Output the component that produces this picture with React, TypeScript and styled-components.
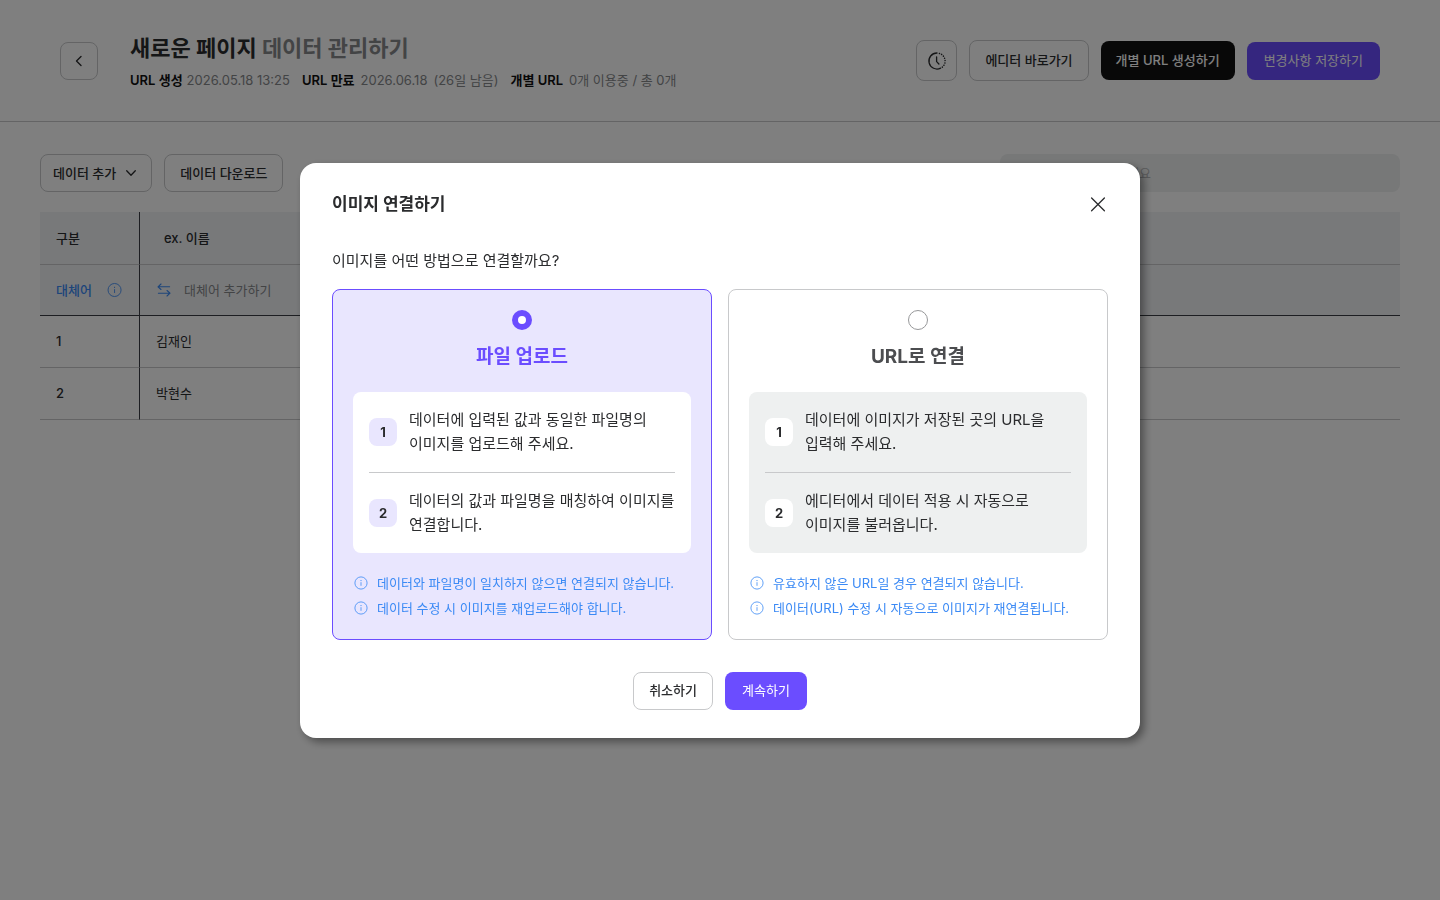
import React, { useState } from "react";
import styled, { createGlobalStyle, css } from "styled-components";

const color = {
  text: "#2b2c2e",
  strong: "#111111",
  sub: "#86888b",
  line: "#c8c9cb",
  purple: "#6b4dff",
  lilac: "#e9e6fe",
  blue: "#3b8af5",
  mist: "#eef0f0",
  head: "#f0f2f5",
  white: "#ffffff",
};

const GlobalStyle = createGlobalStyle`
  *, *::before, *::after { box-sizing: border-box; }
  body {
    margin: 0;
    background: ${color.white};
    color: ${color.text};
    font-family: Inter, "Noto Sans CJK KR", sans-serif;
    font-size: 13px;
    line-height: 21px;
    word-break: keep-all;
  }
  button, input { font: inherit; color: inherit; }
  button { cursor: pointer; }
  h1, h2, h3, p, ol, ul, dl, dd { margin: 0; padding: 0; }
  ol, ul { list-style: none; }
`;

const Page = styled.div`
  min-height: 100vh;
`;

const PageHeader = styled.header`
  display: flex;
  align-items: center;
  height: 122px;
  padding: 0 60px;
  border-bottom: 1px solid ${color.line};
`;

type Variant = "outline" | "black" | "purple";

const variants = {
  outline: css`
    padding: 0 15px;
    border: 1px solid ${color.line};
    background: ${color.white};
  `,
  black: css`
    padding: 0 15px;
    border: 0;
    background: ${color.strong};
    color: ${color.white};
  `,
  purple: css`
    padding: 0 17px;
    border: 0;
    background: ${color.purple};
    color: ${color.white};
    font-weight: 400;
  `,
};

const Button = styled.button<{ $variant?: Variant; $height?: number }>`
  display: inline-flex;
  align-items: center;
  justify-content: center;
  gap: 8px;
  height: ${({ $height = 38 }) => $height}px;
  border-radius: 8px;
  font-weight: 500;
  white-space: nowrap;
  ${({ $variant = "outline" }) => variants[$variant]}
`;

const IconButton = styled(Button)`
  width: ${({ $height = 38 }) => $height}px;
  padding: 0;
`;

const DropButton = styled(Button)`
  padding: 0 13px 0 12px;
`;

const Heading = styled.div`
  flex: 1;
  margin-left: 32px;
`;

const PageTitle = styled.h1`
  font-size: 22px;
  line-height: 36px;
  font-weight: 700;
  color: ${color.text};

  span {
    color: ${color.sub};
  }
`;

const MetaList = styled.dl`
  display: flex;
  gap: 12px;
  margin-top: 4px;
`;

const MetaItem = styled.div<{ $gap?: number }>`
  display: flex;
  gap: ${({ $gap = 6 }) => $gap}px;
  white-space: nowrap;

  dt {
    font-weight: 600;
    color: ${color.strong};
  }
  dd {
    color: ${color.sub};
  }
`;

const Actions = styled.div`
  display: flex;
  align-items: center;
  gap: 12px;
`;

const Content = styled.main`
  padding: 32px 40px;
`;

const Toolbar = styled.div`
  display: flex;
  gap: 12px;
  margin-bottom: 20px;
`;

const Search = styled.input`
  width: 400px;
  height: 38px;
  margin-left: auto;
  padding: 0 24px;
  border: 0;
  border-radius: 8px;
  background: ${color.mist};

  &::placeholder {
    color: #b4b6b8;
    opacity: 1;
  }
`;

const Table = styled.table`
  width: 100%;
  border-collapse: separate;
  border-spacing: 0;
  table-layout: fixed;
`;

const Row = styled.tr<{ $height?: number; $shaded?: boolean; $dark?: boolean }>`
  height: ${({ $height = 52 }) => $height}px;
  background: ${({ $shaded }) => ($shaded ? color.head : color.white)};

  > * {
    padding: 0 16px;
    border-bottom: 1px solid ${({ $dark }) => ($dark ? "#3a3d44" : color.line)};
    text-align: left;
    font-weight: 400;
  }
  > :first-child {
    width: 100px;
    border-right: 1px solid #3a3d44;
    font-weight: 500;
  }
`;

const ColumnName = styled.th`
  && {
    padding-left: 24px;
    font-weight: 500;
  }
`;

const AliasLabel = styled.div`
  display: flex;
  align-items: center;
  gap: 14px;
  color: ${color.blue};
`;

const AliasButton = styled.button`
  display: flex;
  align-items: center;
  gap: 12px;
  padding: 0;
  border: 0;
  background: none;
  color: ${color.sub};

  svg {
    color: ${color.blue};
  }
`;

const Overlay = styled.div`
  position: fixed;
  inset: 0;
  display: flex;
  align-items: center;
  justify-content: center;
  background: rgba(0, 0, 0, 0.5);
`;

const Modal = styled.section`
  width: 840px;
  max-width: 100%;
  padding: 28px 32px;
  border-radius: 16px;
  background: ${color.white};
  box-shadow: 4px 4px 8px rgba(0, 0, 0, 0.4);
`;

const ModalHeader = styled.header`
  display: flex;
  align-items: center;
  justify-content: space-between;
  margin-bottom: 32px;
`;

const ModalTitle = styled.h2`
  font-size: 17px;
  line-height: 26px;
  font-weight: 700;
`;

const CloseButton = styled.button`
  display: flex;
  padding: 0;
  border: 0;
  background: none;
`;

const Question = styled.p`
  margin-bottom: 16px;
  font-size: 15px;
  line-height: 24px;
`;

const Options = styled.div`
  display: grid;
  grid-template-columns: 1fr 1fr;
  gap: 16px;
`;

const OptionCard = styled.label<{ $selected: boolean }>`
  display: flex;
  flex-direction: column;
  align-items: center;
  padding: 20px;
  border: 1px solid ${({ $selected }) => ($selected ? color.purple : color.line)};
  border-radius: 8px;
  background: ${({ $selected }) => ($selected ? color.lilac : color.white)};
  cursor: pointer;
`;

const Radio = styled.input`
  appearance: none;
  width: 20px;
  height: 20px;
  margin: 0;
  border: 1px solid #97989a;
  border-radius: 50%;
  background: ${color.white};

  &:checked {
    border: 6px solid ${color.purple};
  }
`;

const OptionTitle = styled.h3<{ $selected: boolean }>`
  margin: 12px 0 20px;
  font-size: 19px;
  line-height: 30px;
  font-weight: 700;
  color: ${({ $selected }) => ($selected ? color.purple : "#4c4d50")};
`;

const Steps = styled.ol<{ $selected: boolean }>`
  width: 100%;
  padding: 0 16px;
  border-radius: 8px;
  background: ${({ $selected }) => ($selected ? color.white : color.mist)};
`;

const Step = styled.li`
  display: flex;
  align-items: center;
  gap: 12px;
  padding: 16px 0;
  font-size: 15px;
  line-height: 24px;

  & + & {
    border-top: 1px solid ${color.line};
  }
`;

const StepNumber = styled.span<{ $selected: boolean }>`
  flex: none;
  width: 28px;
  height: 28px;
  border-radius: 8px;
  background: ${({ $selected }) => ($selected ? color.lilac : color.white)};
  font-size: 13px;
  line-height: 28px;
  font-weight: 700;
  text-align: center;
`;

const Notes = styled.ul`
  display: grid;
  gap: 4px;
  width: 100%;
  margin-top: 20px;
`;

const Note = styled.li`
  display: flex;
  align-items: center;
  gap: 8px;
  color: ${color.blue};
  white-space: nowrap;
`;

const ModalFooter = styled.footer`
  display: flex;
  justify-content: center;
  gap: 12px;
  margin-top: 32px;
`;

const InfoIcon = ({ size = 16 }: { size?: number }) => (
  <svg width={size} height={size} viewBox="0 0 16 16" fill="none" stroke="currentColor" aria-hidden="true">
    <circle cx="8" cy="8" r="6.1" strokeWidth="0.8" />
    <path d="M8 7.2v3.6" strokeWidth="0.8" />
    <path d="M8 5v1.1" strokeWidth="0.9" />
  </svg>
);

const BackIcon = () => (
  <svg width="16" height="16" viewBox="0 0 16 16" fill="none" stroke="currentColor" strokeWidth="1.4" strokeLinecap="round" strokeLinejoin="round" aria-hidden="true">
    <path d="M10 3.5 5.5 8l4.5 4.5" />
  </svg>
);

const DownIcon = () => (
  <svg width="14" height="14" viewBox="0 0 14 14" fill="none" stroke="currentColor" strokeWidth="1.3" strokeLinecap="round" strokeLinejoin="round" aria-hidden="true">
    <path d="M2.7 4.8 7 9.2l4.3-4.4" />
  </svg>
);

const HistoryIcon = () => (
  <svg width="20" height="20" viewBox="0 0 20 20" fill="none" stroke="currentColor" strokeWidth="1.3" strokeLinecap="round" aria-hidden="true">
    <path d="M10 2a8 8 0 1 0 3.6 15.1" />
    <path d="M12.4 2.4a8 8 0 0 1 2.6 14" strokeDasharray="0.1 2.3" strokeWidth="1.5" />
    <path d="M9.6 6v4.6l2.3 2.4" />
  </svg>
);

const SwapIcon = () => (
  <svg width="16" height="16" viewBox="0 0 16 16" fill="none" stroke="currentColor" strokeWidth="1.1" strokeLinecap="round" strokeLinejoin="round" aria-hidden="true">
    <path d="M5 2 2 4.8l3 2.7M2 4.8h11.6" />
    <path d="m11 8.5 3 2.7-3 2.8M14 11.2H2.4" />
  </svg>
);

const CloseIcon = () => (
  <svg width="20" height="20" viewBox="0 0 20 20" fill="none" stroke="currentColor" strokeWidth="1.3" strokeLinecap="round" aria-hidden="true">
    <path d="m3.6 4 12.8 12.8M16.4 4 3.6 16.8" />
  </svg>
);

const methods = [
  {
    id: "file",
    title: "파일 업로드",
    steps: [
      "데이터에 입력된 값과 동일한 파일명의 이미지를 업로드해 주세요.",
      "데이터의 값과 파일명을 매칭하여 이미지를 연결합니다.",
    ],
    notes: [
      "데이터와 파일명이 일치하지 않으면 연결되지 않습니다.",
      "데이터 수정 시 이미지를 재업로드해야 합니다.",
    ],
  },
  {
    id: "url",
    title: "URL로 연결",
    steps: [
      "데이터에 이미지가 저장된 곳의 URL을 입력해 주세요.",
      "에디터에서 데이터 적용 시 자동으로 이미지를 불러옵니다.",
    ],
    notes: [
      "유효하지 않은 URL일 경우 연결되지 않습니다.",
      "데이터(URL) 수정 시 자동으로 이미지가 재연결됩니다.",
    ],
  },
];

const people = ["김재인", "박현수"];

export default function App() {
  const [method, setMethod] = useState("file");

  return (
    <>
      <GlobalStyle />
      <Page>
        <PageHeader>
          <IconButton type="button" aria-label="뒤로 가기">
            <BackIcon />
          </IconButton>
          <Heading>
            <PageTitle>
              새로운 페이지 <span>데이터 관리하기</span>
            </PageTitle>
            <MetaList>
              <MetaItem $gap={4}>
                <dt>URL 생성</dt>
                <dd>2026.05.18 13:25</dd>
              </MetaItem>
              <MetaItem>
                <dt>URL 만료</dt>
                <dd>2026.06.18</dd>
                <dd>(26일 남음)</dd>
              </MetaItem>
              <MetaItem>
                <dt>개별 URL</dt>
                <dd>0개 이용중 / 총 0개</dd>
              </MetaItem>
            </MetaList>
          </Heading>
          <Actions>
            <IconButton type="button" $height={41} aria-label="변경 기록">
              <HistoryIcon />
            </IconButton>
            <Button type="button" $height={41}>에디터 바로가기</Button>
            <Button type="button" $variant="black" $height={39}>개별 URL 생성하기</Button>
            <Button type="button" $variant="purple">변경사항 저장하기</Button>
          </Actions>
        </PageHeader>

        <Content>
          <Toolbar>
            <DropButton type="button">
              데이터 추가
              <DownIcon />
            </DropButton>
            <Button type="button">데이터 다운로드</Button>
            <Search type="search" aria-label="검색" placeholder="검색어를 입력해 주세요" />
          </Toolbar>
          <Table>
            <thead>
              <Row $height={53} $shaded>
                <th scope="col">구분</th>
                <ColumnName scope="col">ex. 이름</ColumnName>
              </Row>
            </thead>
            <tbody>
              <Row $height={51} $shaded $dark>
                <th scope="row">
                  <AliasLabel>
                    대체어
                    <InfoIcon size={18} />
                  </AliasLabel>
                </th>
                <td>
                  <AliasButton type="button">
                    <SwapIcon />
                    대체어 추가하기
                  </AliasButton>
                </td>
              </Row>
              {people.map((name, i) => (
                <Row key={name}>
                  <th scope="row">{i + 1}</th>
                  <td>{name}</td>
                </Row>
              ))}
            </tbody>
          </Table>
        </Content>
      </Page>

      <Overlay>
        <Modal role="dialog" aria-modal="true" aria-labelledby="modal-title">
          <ModalHeader>
            <ModalTitle id="modal-title">이미지 연결하기</ModalTitle>
            <CloseButton type="button" aria-label="닫기">
              <CloseIcon />
            </CloseButton>
          </ModalHeader>
          <Question>이미지를 어떤 방법으로 연결할까요?</Question>
          <Options role="radiogroup" aria-label="이미지 연결 방법">
            {methods.map(({ id, title, steps, notes }) => {
              const selected = method === id;
              return (
                <OptionCard key={id} htmlFor={id} $selected={selected}>
                  <Radio id={id} type="radio" name="method" checked={selected} onChange={() => setMethod(id)} />
                  <OptionTitle $selected={selected}>{title}</OptionTitle>
                  <Steps $selected={selected}>
                    {steps.map((step, i) => (
                      <Step key={step}>
                        <StepNumber $selected={selected}>{i + 1}</StepNumber>
                        <p>{step}</p>
                      </Step>
                    ))}
                  </Steps>
                  <Notes>
                    {notes.map((note) => (
                      <Note key={note}>
                        <InfoIcon />
                        {note}
                      </Note>
                    ))}
                  </Notes>
                </OptionCard>
              );
            })}
          </Options>
          <ModalFooter>
            <Button type="button">취소하기</Button>
            <Button type="button" $variant="purple">계속하기</Button>
          </ModalFooter>
        </Modal>
      </Overlay>
    </>
  );
}
